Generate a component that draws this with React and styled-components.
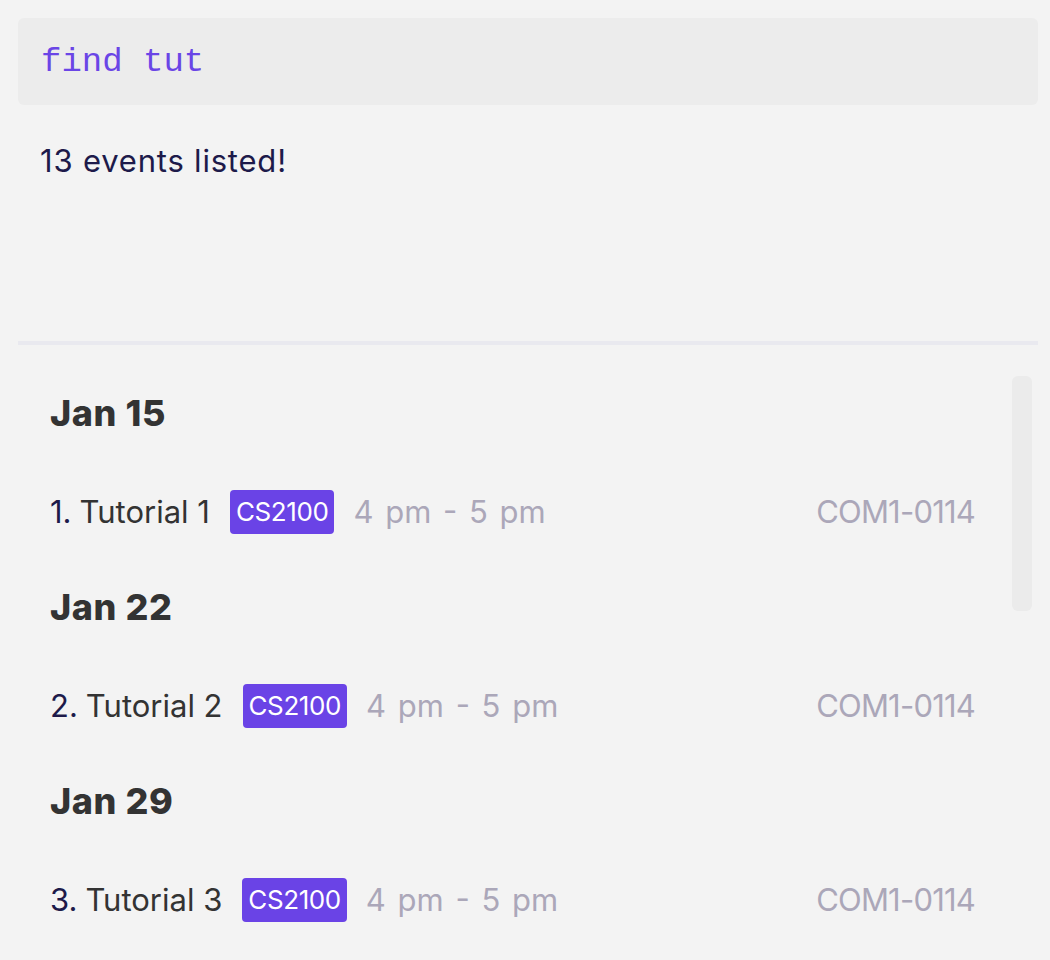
import React from 'react'
import styled, { createGlobalStyle } from 'styled-components'

const GlobalStyle = createGlobalStyle`
  body {
    margin: 0;
    background: #f3f3f3;
    font-family: "Inter", "Noto Sans", sans-serif;
  }
`

const Page = styled.div`
  width: 1050px;
  height: 960px;
  box-sizing: border-box;
  padding: 18px 12px 0 18px;
  overflow: hidden;
  display: flex;
  flex-direction: column;
`

const CommandBox = styled.div`
  width: 1020px;
  height: 87px;
  box-sizing: border-box;
  background: #ececec;
  border-radius: 6px;
  display: flex;
  align-items: center;
  padding-left: 23px;
  font-family: "Liberation Mono", "DejaVu Sans Mono", monospace;
  font-size: 34px;
  color: #6a45e6;
`

const ResultBox = styled.div`
  height: 236px;
  box-sizing: border-box;
  padding: 37px 0 0 22px;
  font-size: 31px;
  letter-spacing: 0.8px;
  color: #1d1a4a;
`

const Divider = styled.div`
  width: 1020px;
  height: 4px;
  background: #e9e9ef;
`

const ListArea = styled.div`
  display: flex;
  flex: 1;
  min-height: 0;
`

const List = styled.div`
  width: 957px;
  box-sizing: border-box;
  padding: 19px 0 0 32px;
  display: flex;
  flex-direction: column;
`

const DateHeader = styled.div`
  height: 98px;
  display: flex;
  align-items: center;
  font-size: 36px;
  font-weight: 800;
  letter-spacing: 0.6px;
  color: #333333;
`

const Row = styled.div`
  height: 96px;
  padding-top: 3px;
  box-sizing: border-box;
  display: flex;
  align-items: center;
  font-size: 31px;
`

const Index = styled.span`
  color: #1d1a4a;
  margin-right: 8px;
`

const Title = styled.span`
  color: #333333;
`

const Badge = styled.span`
  margin-left: 20px;
  height: 44px;
  padding: 0 6px;
  box-sizing: border-box;
  display: inline-flex;
  align-items: center;
  background: #6a43e6;
  border-radius: 4px;
  color: #ffffff;
  font-size: 26px;
  letter-spacing: -0.4px;
`

const Muted = styled.span`
  color: #aba7b9;
`

const Time = styled(Muted)`
  margin-left: 19px;
  word-spacing: 3px;
`

const Location = styled(Muted)`
  margin-left: auto;
  letter-spacing: -0.8px;
`

const Scrollbar = styled.div`
  width: 20px;
  height: 235px;
  margin: 31px 0 0 37px;
  background: #ebebeb;
  border-radius: 6px;
`

const events = [
  { date: 'Jan 15', n: 1, title: 'Tutorial 1' },
  { date: 'Jan 22', n: 2, title: 'Tutorial 2' },
  { date: 'Jan 29', n: 3, title: 'Tutorial 3' },
]

export default function App() {
  return (
    <Page>
      <GlobalStyle />
      <CommandBox>find tut</CommandBox>
      <ResultBox>13 events listed!</ResultBox>
      <Divider />
      <ListArea>
        <List>
          {events.map(ev => (
            <React.Fragment key={ev.n}>
              <DateHeader>{ev.date}</DateHeader>
              <Row>
                <Index>{ev.n}.</Index>
                <Title>{ev.title}</Title>
                <Badge>CS2100</Badge>
                <Time>4 pm - 5 pm</Time>
                <Location>COM1-0114</Location>
              </Row>
            </React.Fragment>
          ))}
        </List>
        <Scrollbar />
      </ListArea>
    </Page>
  )
}
